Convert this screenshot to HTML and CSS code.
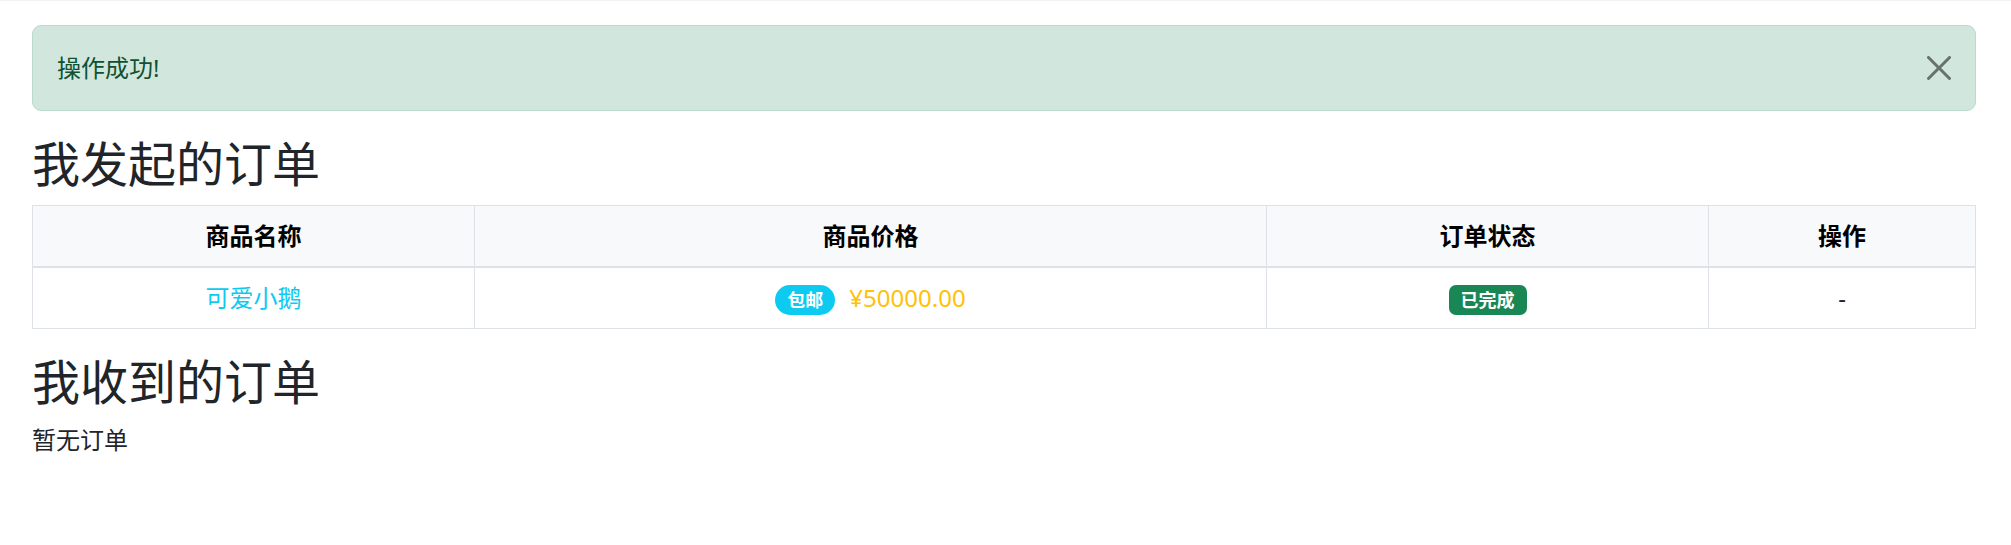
FILE: index.html
```html
<!DOCTYPE html>
<html lang="zh-CN">
<head>
<meta charset="utf-8">
<title>订单</title>
<link rel="stylesheet" href="styles.css">
</head>
<body>
<div class="page">
  <div class="alert">
    <span class="alert-text">操作成功!</span>
    <button class="btn-close" type="button" aria-label="Close">
      <svg viewBox="0 0 16 16" width="24" height="24"><path d="M.293.293a1 1 0 0 1 1.414 0L8 6.586 14.293.293a1 1 0 1 1 1.414 1.414L9.414 8l6.293 6.293a1 1 0 0 1-1.414 1.414L8 9.414l-6.293 6.293a1 1 0 0 1-1.414-1.414L6.586 8 .293 1.707a1 1 0 0 1 0-1.414z"/></svg>
    </button>
  </div>

  <h2 class="title">我发起的订单</h2>
  <table class="orders">
    <colgroup>
      <col class="c-name">
      <col class="c-price">
      <col class="c-status">
      <col class="c-op">
    </colgroup>
    <thead>
      <tr>
        <th>商品名称</th>
        <th>商品价格</th>
        <th>订单状态</th>
        <th>操作</th>
      </tr>
    </thead>
    <tbody>
      <tr>
        <td><a class="item-link" href="#">可爱小鹅</a></td>
        <td><span class="badge badge-pill">包邮</span><span class="price">¥50000.00</span></td>
        <td><span class="badge badge-success">已完成</span></td>
        <td>-</td>
      </tr>
    </tbody>
  </table>

  <h2 class="title">我收到的订单</h2>
  <p class="empty">暂无订单</p>
</div>
</body>
</html>
```

FILE: styles.css
```css
html, body {
  margin: 0;
  padding: 0;
  background: #ffffff;
}

body {
  border-top: 1px solid #f2f2f2;
  font-family: "Noto Sans", "Noto Sans CJK SC", sans-serif;
  font-size: 24px;
  line-height: 1.5;
  color: #212529;
}

.page {
  padding: 24px 35px 0 32px;
}

.alert {
  position: relative;
  display: flex;
  align-items: center;
  padding: 24px 72px 24px 24px;
  margin-bottom: 24px;
  background: #d1e7dd;
  border: 1px solid #badbcc;
  border-radius: 9px;
  color: #0f5132;
  height: 36px;
}

.alert-text {
  line-height: 36px;
}

.btn-close {
  position: absolute;
  top: 0;
  right: 0;
  width: 72px;
  height: 100%;
  padding: 0;
  border: 0;
  background: transparent;
  display: flex;
  align-items: center;
  justify-content: center;
  cursor: pointer;
}

.btn-close svg {
  fill: #000;
  opacity: 0.5;
  display: block;
}

.title {
  margin: 0 0 12px 0;
  font-size: 48px;
  font-weight: 400;
  line-height: 1.2;
  color: #212529;
}

.orders {
  width: 100%;
  border-collapse: collapse;
  table-layout: fixed;
  margin-bottom: 24px;
}

.c-name { width: 442px; }
.c-price { width: 792px; }
.c-status { width: 442px; }
.c-op { width: 267px; }

.orders th,
.orders td {
  border: 1px solid #dee2e6;
  padding: 12px;
  text-align: center;
  vertical-align: top;
  line-height: 36px;
}

.orders thead th {
  background: #f8f9fa;
  color: #000;
  font-weight: 700;
  border-bottom: 2px solid #dee2e6;
}

.item-link {
  color: #0dcaf0;
  text-decoration: none;
}

.badge {
  display: inline-block;
  padding: 6px 12px;
  font-size: 18px;
  font-weight: 700;
  line-height: 1;
  color: #fff;
  vertical-align: baseline;
  white-space: nowrap;
}

.badge-pill {
  background: #0dcaf0;
  border-radius: 16px;
  margin-right: 14px;
}

.badge-success {
  background: #198754;
  border-radius: 7px;
}

.price {
  color: #ffc107;
}

.empty {
  margin: 0;
}
```
